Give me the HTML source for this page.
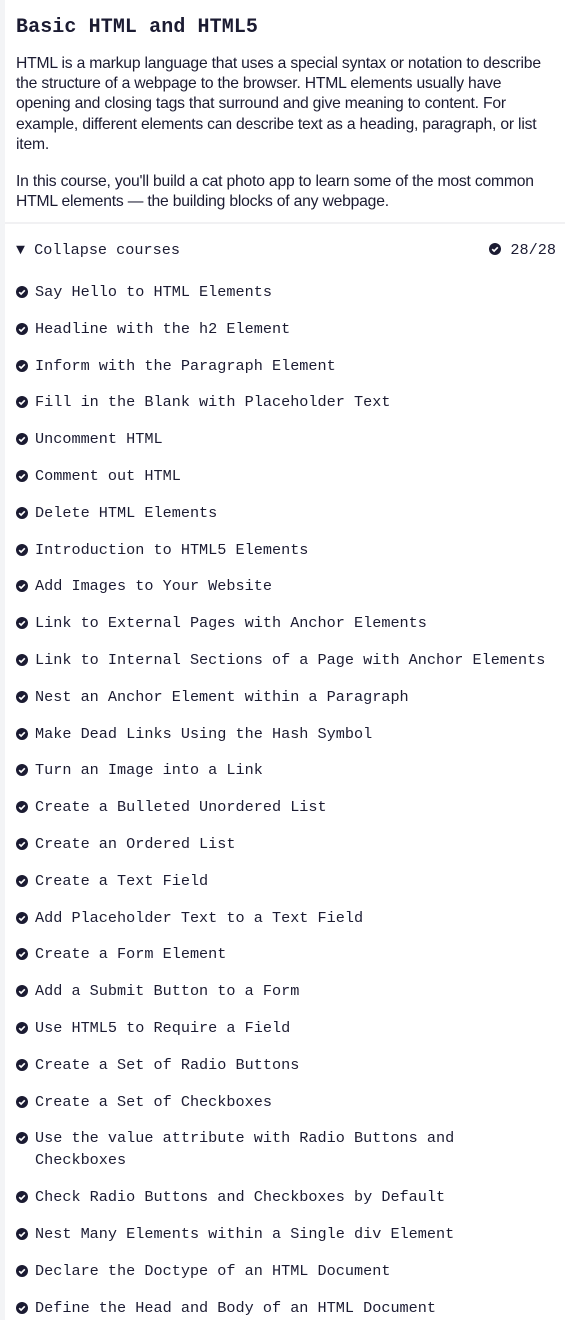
<!DOCTYPE html>
<html><head><meta charset="utf-8"><style>
*{margin:0;padding:0;box-sizing:border-box}
html,body{width:565px;height:1320px;overflow:hidden;background:#fff;color:#1b1b32}
body{position:relative}
.strip{position:absolute;left:0;top:0;width:5px;height:1320px;background:#f3f4f6}
h1{position:absolute;left:16px;top:14px;font:bold 20px/28px "Liberation Mono",monospace;letter-spacing:0.1px}
.p{position:absolute;left:16px;font:15.7px/20.2px "Liberation Sans",sans-serif;white-space:nowrap;letter-spacing:-0.2px}
.sep{position:absolute;left:5px;right:0;top:222px;height:2px;background:#f1f1f3}
.mono{font:15.2px/22px "Liberation Mono",monospace;letter-spacing:0}
.row{position:absolute;left:16px;top:239px;right:9px}
.row .r{position:absolute;right:0;top:0}
ul{position:absolute;left:16px;top:281px;list-style:none}
li{position:relative;padding-left:19px;margin-bottom:14.8px;width:535px}
svg.c{position:absolute;left:0;top:5px;width:12px;height:12px}
</style></head><body>
<div class="strip"></div>
<h1>Basic HTML and HTML5</h1>
<div class="p" style="top:54px">HTML is a markup language that uses a special syntax or notation to describe<br>the structure of a webpage to the browser. HTML elements usually have<br>opening and closing tags that surround and give meaning to content. For<br>example, different elements can describe text as a heading, paragraph, or list<br>item.</div>
<div class="p" style="top:172px">In this course, you'll build a cat photo app to learn some of the most common<br>HTML elements — the building blocks of any webpage.</div>
<div class="sep"></div>
<div class="row mono"><span style="font-size:15px">▼</span> Collapse courses<span class="r"><svg style="display:inline-block;vertical-align:-1px;width:12px;height:12px" viewBox="0 0 12 12"><circle cx="6" cy="6" r="6" fill="#1b1b32"/><path d="M3.2 6.2l1.9 1.9 3.7-3.8" stroke="#fff" stroke-width="1.7" fill="none"/></svg> 28/28</span></div>
<ul class="mono" id="l"></ul>
<script>
var items=["Say Hello to HTML Elements","Headline with the h2 Element","Inform with the Paragraph Element","Fill in the Blank with Placeholder Text","Uncomment HTML","Comment out HTML","Delete HTML Elements","Introduction to HTML5 Elements","Add Images to Your Website","Link to External Pages with Anchor Elements","Link to Internal Sections of a Page with Anchor Elements","Nest an Anchor Element within a Paragraph","Make Dead Links Using the Hash Symbol","Turn an Image into a Link","Create a Bulleted Unordered List","Create an Ordered List","Create a Text Field","Add Placeholder Text to a Text Field","Create a Form Element","Add a Submit Button to a Form","Use HTML5 to Require a Field","Create a Set of Radio Buttons","Create a Set of Checkboxes","Use the value attribute with Radio Buttons and Checkboxes","Check Radio Buttons and Checkboxes by Default","Nest Many Elements within a Single div Element","Declare the Doctype of an HTML Document","Define the Head and Body of an HTML Document"];
var ic='<svg class="c" viewBox="0 0 12 12"><circle cx="6" cy="6" r="6" fill="#1b1b32"/><path d="M3.2 6.2l1.9 1.9 3.7-3.8" stroke="#fff" stroke-width="1.7" fill="none"/></svg>';
var h="";items.forEach(function(t){h+="<li>"+ic+t+"</li>"});document.getElementById("l").innerHTML=h;
</script>
</body></html>
